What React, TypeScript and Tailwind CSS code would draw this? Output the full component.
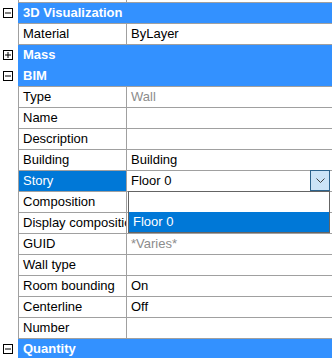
import React from 'react';

const LINE = 'border-[#a0a0a0]';

type Row =
  | { kind: 'header'; label: string; open: boolean; blueTop?: boolean }
  | { kind: 'prop'; label: string; value?: string; dim?: boolean; story?: boolean };

const rows: Row[] = [
  { kind: 'header', label: '3D Visualization', open: true },
  { kind: 'prop', label: 'Material', value: 'ByLayer' },
  { kind: 'header', label: 'Mass', open: false },
  { kind: 'header', label: 'BIM', open: true, blueTop: true },
  { kind: 'prop', label: 'Type', value: 'Wall', dim: true },
  { kind: 'prop', label: 'Name' },
  { kind: 'prop', label: 'Description' },
  { kind: 'prop', label: 'Building', value: 'Building' },
  { kind: 'prop', label: 'Story', value: 'Floor 0', story: true },
  { kind: 'prop', label: 'Composition' },
  { kind: 'prop', label: 'Display composition' },
  { kind: 'prop', label: 'GUID', value: '*Varies*', dim: true },
  { kind: 'prop', label: 'Wall type' },
  { kind: 'prop', label: 'Room bounding', value: 'On' },
  { kind: 'prop', label: 'Centerline', value: 'Off' },
  { kind: 'prop', label: 'Number' },
  { kind: 'header', label: 'Quantity', open: true },
];

function Expander({ open }: { open: boolean }) {
  return (
    <svg width="10" height="10" viewBox="0 0 10 10" className="block">
      <rect x="0.5" y="0.5" width="9" height="9" fill="#fff" stroke="#000" />
      <line x1="2" y1="5" x2="8" y2="5" stroke="#000" />
      {!open && <line x1="5" y1="2" x2="5" y2="8" stroke="#000" />}
    </svg>
  );
}

function StoryDropdown() {
  return (
    <>
      <div className="absolute right-[2px] top-[-1px] w-[20px] h-[21px] bg-[#cce4f7] border border-[#2c628b] flex items-center justify-center">
        <svg width="9" height="5" viewBox="0 0 9 5">
          <polyline points="0.5,0.5 4.5,4.5 8.5,0.5" fill="none" stroke="#404040" strokeWidth="1" />
        </svg>
      </div>
      <div className="absolute left-[1px] top-[20px] w-[202px] h-[42px] bg-white border border-[#646464] z-10 flex flex-col">
        <div className="h-[20px]" />
        <div className="h-[20px] bg-[#0078d7] text-white pl-[4px] leading-[20px]">Floor 0</div>
      </div>
    </>
  );
}

export default function App() {
  return (
    <div className="w-[332px] h-[358px] overflow-hidden bg-white text-[13px] text-black" style={{ fontFamily: '"Liberation Sans", Arial, sans-serif' }}>
      <div className="flex h-[2px]">
        <div className="w-[18px] shrink-0" />
        <div className={`flex flex-1 border-l ${LINE}`}>
          <div className="w-[107px]" />
          <div className={`flex-1 border-l ${LINE}`} />
        </div>
      </div>
      {rows.map((r, i) =>
        r.kind === 'header' ? (
          <div key={i} className="flex h-[21px]">
            <div className="w-[18px] shrink-0 flex items-center pl-[3px] pt-[1px]">
              <Expander open={r.open} />
            </div>
            <div className={`flex-1 border-t ${r.blueTop ? 'border-[#3391ff]' : LINE} bg-[#3391ff] text-white font-bold pl-[5px] leading-[20px] whitespace-nowrap`}>
              {r.label}
            </div>
          </div>
        ) : (
          <div key={i} className="flex h-[21px]">
            <div className="w-[18px] shrink-0" />
            <div className={`flex flex-1 border-t border-l ${LINE}`}>
              <div className={`w-[107px] overflow-hidden whitespace-nowrap pl-[4px] leading-[20px] ${r.story ? 'bg-[#0078d7] text-white' : ''}`}>
                {r.label}
              </div>
              <div className={`relative flex-1 border-l ${LINE} pl-[4px] leading-[20px] whitespace-nowrap ${r.dim ? 'text-[#8c8c8c]' : ''}`}>
                {r.value}
                {r.story && <StoryDropdown />}
              </div>
            </div>
          </div>
        )
      )}
    </div>
  );
}
